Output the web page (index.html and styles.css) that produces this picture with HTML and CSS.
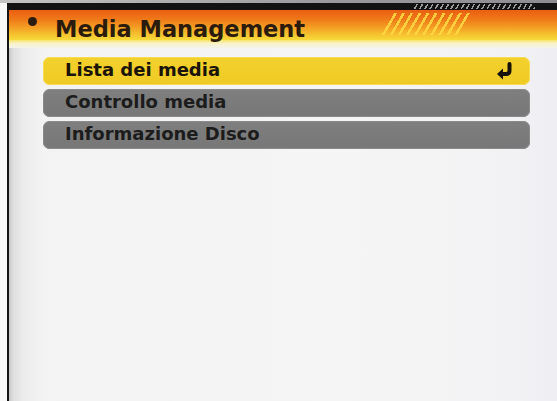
FILE: index.html
```html
<!DOCTYPE html>
<html lang="it">
<head>
<meta charset="utf-8">
<title>Media Management</title>
<link rel="stylesheet" href="styles.css">
</head>
<body>
<div class="screen">
  <div class="top-strip"></div>
  <div class="main">
    <div class="gutter"></div>
    <div class="panel">
      <div class="dark-bar"><div class="hatch"></div></div>
      <div class="title-bar">
        <span class="bullet"></span>
        <h1 class="title">Media Management</h1>
        <div class="stripes"></div>
      </div>
      <div class="glow"></div>
      <ul class="menu">
        <li class="item item-active">
          <span class="label">Lista dei media</span>
          <svg class="enter" viewBox="0 0 18 18" width="18" height="18" aria-hidden="true">
            <path d="M13.5 2 V8.5 Q13.5 12 10 12 H6" fill="none" stroke="#161208" stroke-width="4" stroke-linecap="round"/>
            <polygon points="1,12 7,6.5 7,17.5" fill="#161208"/>
          </svg>
        </li>
        <li class="item"><span class="label">Controllo media</span></li>
        <li class="item"><span class="label">Informazione Disco</span></li>
      </ul>
    </div>
  </div>
</div>
</body>
</html>
```

FILE: styles.css
```css
* { box-sizing: border-box; }

html, body {
  margin: 0;
  padding: 0;
  width: 557px;
  height: 401px;
  overflow: hidden;
  background: #f6f6f6;
  font-family: "DejaVu Sans", "Liberation Sans", sans-serif;
}

.screen {
  display: flex;
  flex-direction: column;
  width: 557px;
  height: 401px;
}

.top-strip {
  height: 3px;
  background: linear-gradient(to right, #c4c4c4, #9a9a9e 60%, #8c8c92);
}

.main {
  flex: 1;
  display: flex;
}

.gutter {
  width: 7px;
  background: #f8f8f8;
}

.panel {
  flex: 1;
  display: flex;
  flex-direction: column;
  border-left: 2px solid #141414;
  background:
    linear-gradient(to right, #c6c6c6 0, #dedede 4px, #ececec 14px, #f3f3f3 34px, #f5f5f5 60%, #f2f2f4 92%, #eeeef3 100%);
}

.dark-bar {
  position: relative;
  height: 7px;
  background: #121212;
}

.hatch {
  position: absolute;
  left: 404px;
  top: 1px;
  width: 122px;
  height: 5px;
  background: repeating-linear-gradient(120deg, #121212 0 3px, #9a9a9a 3px 4.5px);
}

.title-bar {
  position: relative;
  height: 30px;
  display: flex;
  align-items: flex-start;
  background: linear-gradient(#ea5f12 0%, #ef7818 30%, #f39a22 55%, #f5c02e 80%, #f7da3a 100%);
}

.bullet {
  width: 9px;
  height: 9px;
  margin-left: 19px;
  margin-top: 7px;
  border-radius: 50%;
  background: #2a1c10;
}

.title {
  margin: 0 0 0 18px;
  padding-top: 6px;
  font-size: 22.5px;
  line-height: 26px;
  font-weight: bold;
  color: #2a1b0c;
  white-space: nowrap;
}

.stripes {
  position: absolute;
  left: 372px;
  top: 3px;
  width: 92px;
  height: 22px;
  clip-path: polygon(12px 0, 92px 0, 80px 100%, 0 100%);
  background: repeating-linear-gradient(120deg, rgba(255, 214, 70, 0) 0 4.5px, rgba(255, 214, 66, 0.9) 4.5px 7px);
}

.glow {
  height: 8px;
  background: linear-gradient(#f8e66a, #f8f2c8 45%, #f4f3ec);
}

.menu {
  list-style: none;
  margin: 0;
  padding: 9px 0 0 34px;
  display: flex;
  flex-direction: column;
  gap: 4px;
}

.item {
  width: 487px;
  height: 28px;
  padding: 0 0 2px 22px;
  display: flex;
  align-items: center;
  border-radius: 7px;
  background: linear-gradient(#7f7f7f, #777777);
  box-shadow: inset 0 0 0 1px #8a8a8a;
  color: #1c1c1c;
  font-size: 18px;
  line-height: 26px;
  font-weight: bold;
}

.item-active {
  background: linear-gradient(#f3d12c, #efca24);
  box-shadow: inset 0 0 0 1px #f6dc52;
  color: #1a1408;
}

.label {
  flex: 1;
  white-space: nowrap;
}

.enter {
  margin-right: 16px;
  margin-top: 2px;
}
```
